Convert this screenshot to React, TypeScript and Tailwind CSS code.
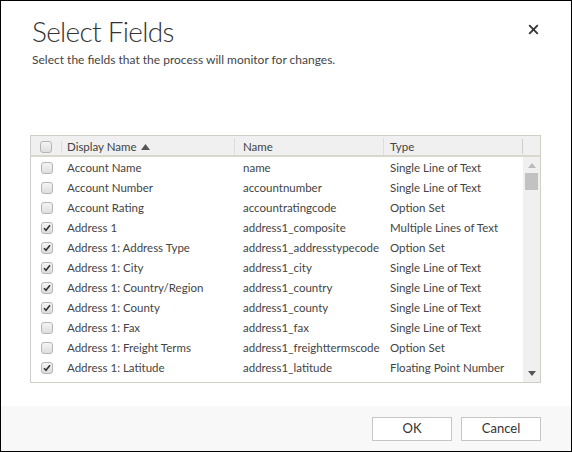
import React from "react";

type Row = { label: string; name: string; type: string; checked: boolean };

const rows: Row[] = [
  { label: "Account Name", name: "name", type: "Single Line of Text", checked: false },
  { label: "Account Number", name: "accountnumber", type: "Single Line of Text", checked: false },
  { label: "Account Rating", name: "accountratingcode", type: "Option Set", checked: false },
  { label: "Address 1", name: "address1_composite", type: "Multiple Lines of Text", checked: true },
  { label: "Address 1: Address Type", name: "address1_addresstypecode", type: "Option Set", checked: true },
  { label: "Address 1: City", name: "address1_city", type: "Single Line of Text", checked: true },
  { label: "Address 1: Country/Region", name: "address1_country", type: "Single Line of Text", checked: true },
  { label: "Address 1: County", name: "address1_county", type: "Single Line of Text", checked: true },
  { label: "Address 1: Fax", name: "address1_fax", type: "Single Line of Text", checked: false },
  { label: "Address 1: Freight Terms", name: "address1_freighttermscode", type: "Option Set", checked: false },
  { label: "Address 1: Latitude", name: "address1_latitude", type: "Floating Point Number", checked: true },
];

const Box = ({ checked }: { checked: boolean }) => (
  <span className="flex h-[12px] w-[12px] items-center justify-center rounded-[3px] border border-[#b5b5b5] bg-gradient-to-b from-[#f4f4f4] to-[#dedede]">
    {checked && (
      <svg width="8" height="8" viewBox="0 0 8 8">
        <path d="M1 4.2 L3 6.3 L7 1.2" fill="none" stroke="#333" strokeWidth="1.6" />
      </svg>
    )}
  </span>
);

export default function App() {
  return (
    <div
      className="flex h-[452px] w-[572px] flex-col border border-black bg-white text-[#444]"
      style={{ fontFamily: '"Segoe UI", Lato, "Open Sans", sans-serif' }}
    >
      <div className="relative flex-1 px-[29px]">
        <h1 className="ml-[2px] mt-[12px] text-[28px] font-light leading-[36px] tracking-[-0.7px] text-[#333]">Select Fields</h1>
        <p className="ml-[2px] mt-[3px] text-[12px] leading-[16px]">Select the fields that the process will monitor for changes.</p>
        <button className="absolute right-[32px] top-[23px] text-[#333]">
          <svg width="11" height="11" viewBox="0 0 11 11">
            <path d="M1.2 1.2 L9.8 9.8 M9.8 1.2 L1.2 9.8" stroke="#333" strokeWidth="1.8" />
          </svg>
        </button>

        <div className="mt-[67px] flex h-[248px] w-[511px] flex-col overflow-hidden border border-[#cfcfc8] text-[11.5px]">
          <div className="flex h-[21px] shrink-0 items-center border-b-2 border-[#d8d8cc] bg-[#f0f0f0] pt-[2px]">
            <div className="flex w-[31px] justify-center border-r border-[#ddd]">
              <Box checked={false} />
            </div>
            <div className="flex w-[172px] items-center gap-[4px] pl-[5px]">
              Display Name
              <svg width="9" height="6" viewBox="0 0 9 6">
                <path d="M0 6 L4.5 0 L9 6 Z" fill="#555" />
              </svg>
            </div>
            <div className="w-[149px] border-l border-[#ddd] pl-[8px]">Name</div>
            <div className="w-[139px] border-l border-[#ddd] pl-[6px]">Type</div>
            <div className="h-[15px] flex-1 border-l border-[#ccc]" />
          </div>
          <div className="flex min-h-0 flex-1">
            <div className="flex-1 overflow-hidden pt-[1px]">
              {rows.map((r) => (
                <div key={r.name} className="flex h-[20px] items-center">
                  <div className="flex w-[31px] justify-center">
                    <Box checked={r.checked} />
                  </div>
                  <div className="w-[172px] truncate pl-[5px]">{r.label}</div>
                  <div className="w-[149px] pl-[9px]">{r.name}</div>
                  <div className="pl-[7px]">{r.type}</div>
                </div>
              ))}
              <div className="flex h-[20px] items-start pt-[4px]">
                <div className="flex w-[31px] justify-center">
                  <Box checked={false} />
                </div>
              </div>
            </div>
            <div className="flex w-[17px] flex-col items-center bg-[#f0f0f0]">
              <svg className="mt-[6px]" width="8" height="5" viewBox="0 0 8 5">
                <path d="M0 5 L4 0 L8 5 Z" fill="#bbb" />
              </svg>
              <div className="mt-[5px] h-[17px] w-[13px] bg-[#c2c2c2]" />
              <div className="flex-1" />
              <svg className="mb-[6px]" width="8" height="5" viewBox="0 0 8 5">
                <path d="M0 0 L4 5 L8 0 Z" fill="#555" />
              </svg>
            </div>
          </div>
        </div>
      </div>
      <div className="flex h-[45px] shrink-0 items-center justify-end gap-[9px] bg-[#f8f8f8] pr-[30px]">
        <button className="h-[24px] w-[80px] border border-[#c6c6c6] bg-white text-[13px] text-[#333]">OK</button>
        <button className="h-[24px] w-[80px] border border-[#c6c6c6] bg-white text-[13px] text-[#333]">Cancel</button>
      </div>
    </div>
  );
}
